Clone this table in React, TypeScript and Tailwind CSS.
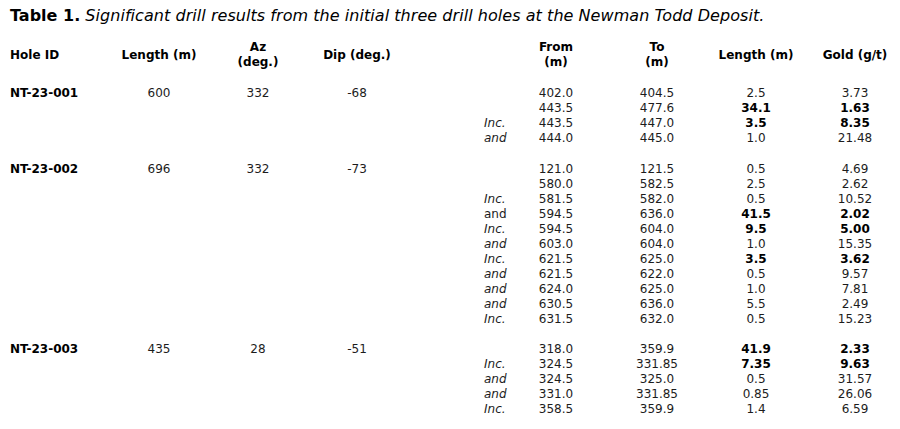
import React from 'react';

type Interval = {
  q?: string;
  qItalic?: boolean;
  from: string;
  to: string;
  len: string;
  gold: string;
  bold?: boolean;
};

type Hole = {
  id: string;
  length: string;
  az: string;
  dip: string;
  rows: Interval[];
};

const holes: Hole[] = [
  {
    id: 'NT-23-001',
    length: '600',
    az: '332',
    dip: '-68',
    rows: [
      { from: '402.0', to: '404.5', len: '2.5', gold: '3.73' },
      { from: '443.5', to: '477.6', len: '34.1', gold: '1.63', bold: true },
      { q: 'Inc.', qItalic: true, from: '443.5', to: '447.0', len: '3.5', gold: '8.35', bold: true },
      { q: 'and', qItalic: true, from: '444.0', to: '445.0', len: '1.0', gold: '21.48' },
    ],
  },
  {
    id: 'NT-23-002',
    length: '696',
    az: '332',
    dip: '-73',
    rows: [
      { from: '121.0', to: '121.5', len: '0.5', gold: '4.69' },
      { from: '580.0', to: '582.5', len: '2.5', gold: '2.62' },
      { q: 'Inc.', qItalic: true, from: '581.5', to: '582.0', len: '0.5', gold: '10.52' },
      { q: 'and', from: '594.5', to: '636.0', len: '41.5', gold: '2.02', bold: true },
      { q: 'Inc.', qItalic: true, from: '594.5', to: '604.0', len: '9.5', gold: '5.00', bold: true },
      { q: 'and', qItalic: true, from: '603.0', to: '604.0', len: '1.0', gold: '15.35' },
      { q: 'Inc.', qItalic: true, from: '621.5', to: '625.0', len: '3.5', gold: '3.62', bold: true },
      { q: 'and', qItalic: true, from: '621.5', to: '622.0', len: '0.5', gold: '9.57' },
      { q: 'and', qItalic: true, from: '624.0', to: '625.0', len: '1.0', gold: '7.81' },
      { q: 'and', qItalic: true, from: '630.5', to: '636.0', len: '5.5', gold: '2.49' },
      { q: 'Inc.', qItalic: true, from: '631.5', to: '632.0', len: '0.5', gold: '15.23' },
    ],
  },
  {
    id: 'NT-23-003',
    length: '435',
    az: '28',
    dip: '-51',
    rows: [
      { from: '318.0', to: '359.9', len: '41.9', gold: '2.33', bold: true },
      { q: 'Inc.', qItalic: true, from: '324.5', to: '331.85', len: '7.35', gold: '9.63', bold: true },
      { q: 'and', qItalic: true, from: '324.5', to: '325.0', len: '0.5', gold: '31.57' },
      { q: 'and', qItalic: true, from: '331.0', to: '331.85', len: '0.85', gold: '26.06' },
      { q: 'Inc.', qItalic: true, from: '358.5', to: '359.9', len: '1.4', gold: '6.59' },
    ],
  },
];

const grid = 'grid grid-cols-[100px_98px_100px_98px_100px_100px_102px_96px_96px] pl-[10px]';

const App: React.FC = () => {
  return (
    <div className="w-[900px] h-[429px] overflow-hidden bg-white text-[#1c1c1c] font-['DejaVu_Sans',Verdana,sans-serif] text-[12px] leading-[15px]">
      <div className="pl-[10px] pt-[6px] text-[16px] leading-[20px] text-black">
        <span className="font-bold">Table 1.</span> <span className="italic tracking-[0.05px]">Significant drill results from the initial three drill holes at the Newman Todd Deposit.</span>
      </div>

      {/* header */}
      <div className={`${grid} mt-[14px] items-center font-bold text-black`}>
        <div>Hole ID</div>
        <div className="text-center">Length (m)</div>
        <div className="text-center">Az<br />(deg.)</div>
        <div className="text-center">Dip (deg.)</div>
        <div />
        <div className="text-center">From<br />(m)</div>
        <div className="text-center">To<br />(m)</div>
        <div className="text-center">Length (m)</div>
        <div className="text-center pl-[6px]">Gold (g/t)</div>
      </div>

      {holes.map((h, hi) => (
        <div key={h.id} className={hi === 0 ? 'mt-[16px]' : hi === 1 ? 'mt-[16px]' : 'mt-[15px]'}>
          {h.rows.map((r, ri) => (
            <div key={ri} className={grid}>
              <div className="font-bold text-black">{ri === 0 ? h.id : ''}</div>
              <div className="text-center">{ri === 0 ? h.length : ''}</div>
              <div className="text-center">{ri === 0 ? h.az : ''}</div>
              <div className="text-center">{ri === 0 ? h.dip : ''}</div>
              <div className={`pl-[78px] whitespace-nowrap ${r.qItalic ? 'italic' : ''}`}>{r.q ?? ''}</div>
              <div className="text-center">{r.from}</div>
              <div className="text-center">{r.to}</div>
              <div className={`text-center ${r.bold ? 'font-bold text-black' : ''}`}>{r.len}</div>
              <div className={`text-center pl-[6px] ${r.bold ? 'font-bold text-black' : ''}`}>{r.gold}</div>
            </div>
          ))}
        </div>
      ))}
    </div>
  );
};

export default App;
